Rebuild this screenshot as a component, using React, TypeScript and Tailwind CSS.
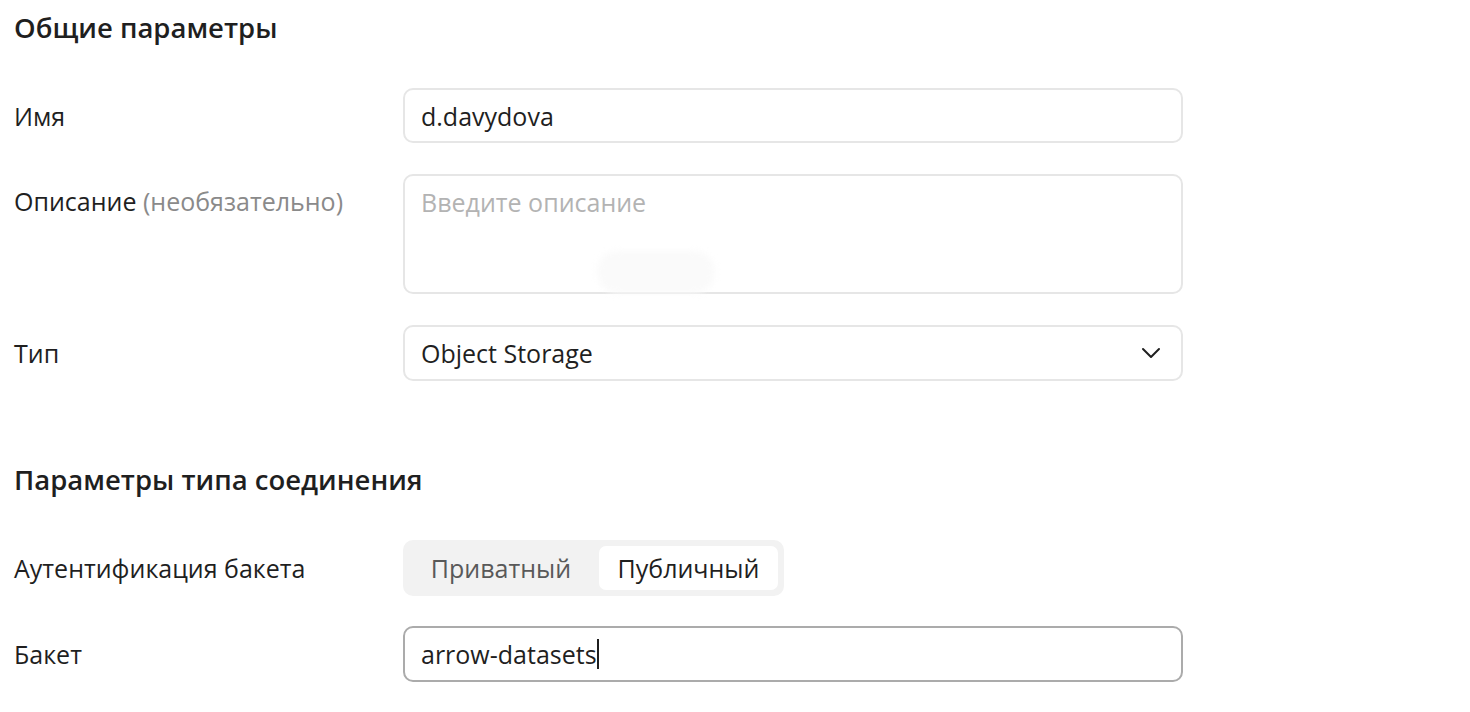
import React from "react";

const font = { fontFamily: "'Open Sans', 'Noto Sans', sans-serif" };

function Row({ label, children, top = false }: { label: React.ReactNode; children: React.ReactNode; top?: boolean }) {
  return (
    <div className={`flex ${top ? "items-start" : "items-center"}`}>
      <div className={`w-[389px] shrink-0 text-[25px] leading-[34px] text-[#1f1f1f] ${top ? "pt-[10px]" : ""}`}>{label}</div>
      <div className="w-[780px]">{children}</div>
    </div>
  );
}

export default function App() {
  return (
    <div className="w-[1470px] h-[712px] bg-white overflow-hidden pl-[14px]" style={font}>
      <h2 className="text-[27.5px] font-semibold text-[#1f1f1f] leading-[34px] pt-[11px]">Общие параметры</h2>
      <div className="mt-[43px] flex flex-col gap-[31px]">
        <Row label="Имя">
          <div className="h-[55px] rounded-[10px] border-2 border-[#e6e6e6] flex items-center px-[16px] text-[25px] leading-[34px] text-[#1f1f1f]">d.davydova</div>
        </Row>
        <Row top label={<>Описание <span className="text-[#8a8a8a]">(необязательно)</span></>}>
          <div className="relative h-[120px] rounded-[10px] border-2 border-[#e6e6e6] px-[16px] pt-[9px] text-[25px] leading-[34px] text-[#b3b3b3]">
            Введите описание
            <div className="absolute left-[192px] top-[75px] w-[118px] h-[42px] rounded-[21px] bg-[#fafafa] blur-[3px]" />
          </div>
        </Row>
        <Row label="Тип">
          <div className="h-[56px] rounded-[10px] border-2 border-[#e6e6e6] flex items-center justify-between pl-[16px] pr-[18px] text-[25px] leading-[34px] text-[#1f1f1f]">
            <span>Object Storage</span>
            <svg width="24" height="24" viewBox="0 0 24 24" fill="none" stroke="#1f1f1f" strokeWidth="2" strokeLinecap="round" strokeLinejoin="round">
              <path d="M4 8l8 8 8-8" />
            </svg>
          </div>
        </Row>
      </div>
      <h2 className="text-[27.5px] font-semibold text-[#1f1f1f] leading-[34px] mt-[82px]">Параметры типа соединения</h2>
      <div className="mt-[43px] flex flex-col gap-[30px]">
        <Row label="Аутентификация бакета">
          <div className="inline-flex h-[56px] rounded-[10px] bg-[#f2f2f2] p-[6px] text-[25px] leading-[34px]">
            <div className="flex items-center text-[#595959] w-[190px] pr-[6px] justify-center">Приватный</div>
            <div className="flex items-center bg-white rounded-[7px] text-[#1f1f1f] w-[179px] justify-center">Публичный</div>
          </div>
        </Row>
        <Row label="Бакет">
          <div className="h-[56px] rounded-[10px] border-2 border-[#ababab] flex items-center px-[16px] text-[25px] leading-[34px] text-[#1f1f1f]">
            arrow-datasets<span className="inline-block w-[2px] h-[30px] bg-[#1f1f1f]" />
          </div>
        </Row>
      </div>
    </div>
  );
}
